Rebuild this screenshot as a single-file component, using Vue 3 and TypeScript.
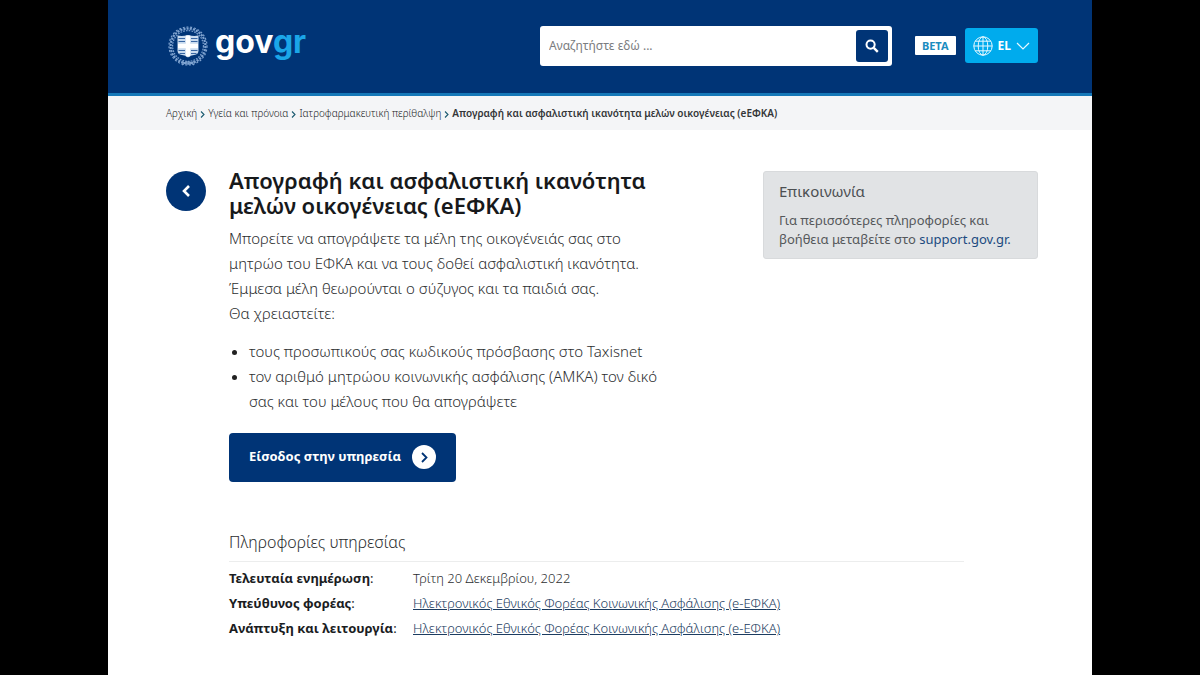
<script setup lang="ts">
interface Crumb {
  label: string
  href: string
}

interface InfoRow {
  label: string
  value: string
  href?: string
}

const crumbs: Crumb[] = [
  { label: 'Αρχική', href: '#home' },
  { label: 'Υγεία και πρόνοια', href: '#health' },
  { label: 'Ιατροφαρμακευτική περίθαλψη', href: '#care' },
]

const requirements: string[] = [
  'τους προσωπικούς σας κωδικούς πρόσβασης στο Taxisnet',
  'τον αριθμό μητρώου κοινωνικής ασφάλισης (ΑΜΚΑ) τον δικό σας και του μέλους που θα απογράψετε',
]

const agency = 'Ηλεκτρονικός Εθνικός Φορέας Κοινωνικής Ασφάλισης (e-ΕΦΚΑ)'

const info: InfoRow[] = [
  { label: 'Τελευταία ενημέρωση', value: 'Τρίτη 20 Δεκεμβρίου, 2022' },
  { label: 'Υπεύθυνος φορέας', value: agency, href: '#agency' },
  { label: 'Ανάπτυξη και λειτουργία', value: agency, href: '#operator' },
]
</script>

<template>
  <div class="page">
    <header class="header">
      <a class="brand" href="#home" aria-label="govgr">
        <svg class="emblem" viewBox="0 0 40 40" aria-hidden="true">
          <g fill="none" stroke="#7fa3d0">
            <circle cx="20" cy="20" r="17.4" stroke-width="2.2" stroke-dasharray="2.1 1.1" />
            <circle cx="20" cy="20" r="15.4" stroke-width="1.2" stroke-dasharray="1.7 1.1" />
            <circle cx="20" cy="20" r="19" stroke-width="1.2" stroke-dasharray="2 1.8" />
            <path d="M14 35.500q6 5 12 0M14 39q6-6 12 0" stroke-width="1.200" />
          </g>
          <path d="M9.500 9.500q5 1 10.500-.5 5.500 1.500 10.500.5v15q0 4-4.500 4.600-4 .5-6 2.400-2-1.900-6-2.400-4.500-.6-4.500-4.600z" fill="#c9dbef" />
          <path d="M10.500 12.500h6.500M10.500 15.500h6.500M10.500 24.500h6.500M11.500 27.500h5.500M23 12.500h6.500M23 15.500h6.500M23 24.500h6.500M23 27.500h5.500" stroke="#3a68a4" stroke-width="1.200" />
          <path d="M20 9.500v21M10 20h20" stroke="#fff" stroke-width="4.400" />
        </svg>
        <span class="wordmark">gov<span class="wordmark-accent">gr</span></span>
      </a>

      <form class="search" role="search" @submit.prevent>
        <input class="search-input" type="text" aria-label="Αναζήτηση" placeholder="Αναζητήστε εδώ ..." />
        <button class="search-button" type="submit" aria-label="Αναζήτηση">
          <svg viewBox="0 0 14 14" width="14" height="14" aria-hidden="true">
            <circle cx="5.600" cy="5.600" r="4.100" fill="none" stroke="#fff" stroke-width="2" />
            <path d="M8.800 8.800l4 4" stroke="#fff" stroke-width="2.400" />
          </svg>
        </button>
      </form>

      <span class="beta">BETA</span>

      <button class="language" type="button">
        <svg viewBox="0 0 20 20" width="20" height="20" fill="none" stroke="#e6f8ff" stroke-width="1" aria-hidden="true">
          <circle cx="10" cy="10" r="9.200" />
          <ellipse cx="10" cy="10" rx="4.800" ry="9.200" />
          <path d="M10 .8v18.400M.8 10h18.400M2.300 5.200h15.400M2.300 14.800h15.400" />
        </svg>
        <span>EL</span>
        <svg viewBox="0 0 14 8" width="14" height="8" fill="none" stroke="#e6f8ff" stroke-width="1.200" aria-hidden="true">
          <path d="M1 1l6 6 6-6" />
        </svg>
      </button>
    </header>

    <nav class="breadcrumb" aria-label="Διαδρομή">
      <ol>
        <li v-for="crumb in crumbs" :key="crumb.href">
          <a :href="crumb.href">{{ crumb.label }}</a>
          <svg viewBox="0 0 5 8" width="5" height="8" fill="none" stroke="#1a5a70" stroke-width="1.100" aria-hidden="true">
            <path d="M1 1.500l3 3-3 3" />
          </svg>
        </li>
        <li class="current" aria-current="page">Απογραφή και ασφαλιστική ικανότητα μελών οικογένειας (eΕΦΚΑ)</li>
      </ol>
    </nav>

    <main class="content">
      <button class="back" type="button" aria-label="Πίσω">
        <svg viewBox="0 0 10 14" width="10" height="14" fill="none" stroke="#fff" stroke-width="2.600" aria-hidden="true">
          <path d="M8 2L3 7l5 5" />
        </svg>
      </button>

      <article class="service">
        <h1>Απογραφή και ασφαλιστική ικανότητα μελών οικογένειας (eΕΦΚΑ)</h1>
        <p>Μπορείτε να απογράψετε τα μέλη της οικογένειάς σας στο μητρώο του ΕΦΚΑ και να τους δοθεί ασφαλιστική ικανότητα. Έμμεσα μέλη θεωρούνται ο σύζυγος και τα παιδιά σας.</p>
        <p>Θα χρειαστείτε:</p>
        <ul>
          <li v-for="item in requirements" :key="item">{{ item }}</li>
        </ul>
        <button class="enter" type="button">
          <span>Είσοδος στην υπηρεσία</span>
          <svg viewBox="0 0 24 24" width="24" height="24" aria-hidden="true">
            <circle cx="12" cy="12" r="12" fill="#fff" />
            <path d="M10 8l4.500 4.500-4.500 4.500" fill="none" stroke="#003476" stroke-width="1.800" />
          </svg>
        </button>
      </article>

      <aside class="contact">
        <h2>Επικοινωνία</h2>
        <p>Για περισσότερες πληροφορίες και βοήθεια μεταβείτε στο <a href="#support">support.gov.gr.</a></p>
      </aside>

      <section class="details">
        <h2>Πληροφορίες υπηρεσίας</h2>
        <dl>
          <template v-for="row in info" :key="row.label">
            <dt>{{ row.label }}<span class="colon">:</span></dt>
            <dd>
              <a v-if="row.href" :href="row.href">{{ row.value }}</a>
              <template v-else>{{ row.value }}</template>
            </dd>
          </template>
        </dl>
      </section>
    </main>
  </div>
</template>

<style>
body {
  margin: 0;
  background: #000;
}
</style>

<style scoped>
* {
  box-sizing: border-box;
}

.page {
  width: 82%;
  min-height: 100vh;
  margin: 0 auto;
  background: #fff;
  color: #2c2e30;
  font-family: "Noto Sans", "Open Sans", sans-serif;
  font-size: 15px;
  font-weight: 300;
  line-height: 25px;
}

h1,
h2,
p,
ul,
ol,
dl,
dd {
  margin: 0;
  padding: 0;
}

button {
  border: 0;
  padding: 0;
  font: inherit;
  cursor: pointer;
}

.header {
  display: flex;
  align-items: center;
  height: 96px;
  padding: 0 54px 2px 60px;
  background: #003476;
  border-bottom: 3px solid #1578b8;
}

.brand {
  display: flex;
  align-items: center;
  gap: 7px;
  margin-right: auto;
  text-decoration: none;
}

.emblem {
  width: 40px;
  height: 40px;
}

.wordmark {
  padding-bottom: 8px;
  color: #fff;
  font-family: Inter, sans-serif;
  font-size: 32px;
  font-weight: 700;
  line-height: 32px;
}

.wordmark-accent {
  color: #1ba6e8;
}

.search {
  display: flex;
  align-items: center;
  flex: 0 1 352px;
  height: 40px;
  margin-right: 23px;
  padding: 4px;
  background: #fff;
  border-radius: 3px;
}

.search-input {
  flex: 1;
  min-width: 0;
  padding: 0 5px;
  border: 0;
  outline: 0;
  background: transparent;
  color: #333;
  font: inherit;
  font-size: 12px;
  font-weight: 400;
}

.search-input::placeholder {
  color: #7b7d80;
  opacity: 1;
}

.search-button {
  display: grid;
  place-items: center;
  width: 32px;
  height: 32px;
  background: #003476;
  border-radius: 3px;
}

.beta {
  margin-right: 9px;
  padding: 0 7px;
  background: #fff;
  border-radius: 1px;
  color: #1b8cc0;
  font-size: 11px;
  font-weight: 700;
  line-height: 19px;
}

.language {
  display: flex;
  align-items: center;
  gap: 5px;
  height: 35px;
  padding: 0 8px;
  background: #00abed;
  border-radius: 3px;
  color: #fff;
  font-size: 12px;
  font-weight: 700;
}

.breadcrumb {
  padding: 5px 58px 4px;
  background: #f4f5f7;
  font-size: 10px;
}

.breadcrumb ol {
  display: flex;
  list-style: none;
}

.breadcrumb li {
  display: flex;
  align-items: center;
  white-space: nowrap;
}

.breadcrumb a {
  color: #222426;
  text-decoration: none;
}

.breadcrumb svg {
  margin: 0 3px;
}

.breadcrumb .current {
  color: #333638;
  font-weight: 600;
}

.content {
  display: grid;
  grid-template-columns: 40px minmax(0, 1fr) 275px;
  column-gap: 23px;
  align-items: start;
  padding: 41px 54px 34px 58px;
}

.back {
  display: grid;
  place-items: center;
  width: 40px;
  height: 40px;
  background: #003476;
  border-radius: 50%;
}

.service {
  max-width: 440px;
  margin-top: -3px;
}

h1 {
  margin-bottom: 8px;
  color: #17191b;
  font-size: 22px;
  font-weight: 600;
  line-height: 25px;
}

.service ul {
  margin: 13px 0 19px;
  padding-left: 20px;
}

.service li::marker {
  color: #222;
}

.enter {
  display: flex;
  align-items: center;
  gap: 11px;
  height: 49px;
  padding: 0 20px 2px;
  background: #003476;
  border-radius: 4px;
  color: #fff;
  font-size: 13px;
  font-weight: 700;
}

.contact {
  padding: 8px 15px 9px;
  background: #e1e3e5;
  border: 1px solid #d8dadc;
  border-radius: 3px;
  color: #55585b;
  font-size: 13px;
  font-weight: 400;
  line-height: 19px;
}

.contact h2 {
  margin-bottom: 8px;
  color: #4c4f52;
  font-size: 15px;
  font-weight: 400;
  line-height: 23px;
}

.contact a {
  color: #204a80;
  text-decoration: none;
}

.details {
  grid-column: 2 / 4;
  margin: 47px 74px 0 0;
}

.details h2 {
  padding-bottom: 6px;
  border-bottom: 1px solid #eceded;
  font-size: 16px;
  font-weight: 300;
  line-height: 26px;
}

.details dl {
  display: grid;
  grid-template-columns: 184px 1fr;
  padding-top: 4px;
  font-size: 13px;
}

.details dt {
  color: #1b1d1f;
  font-weight: 700;
}

.details .colon {
  font-weight: 400;
}

.details a {
  color: #1c3c60;
}
</style>
